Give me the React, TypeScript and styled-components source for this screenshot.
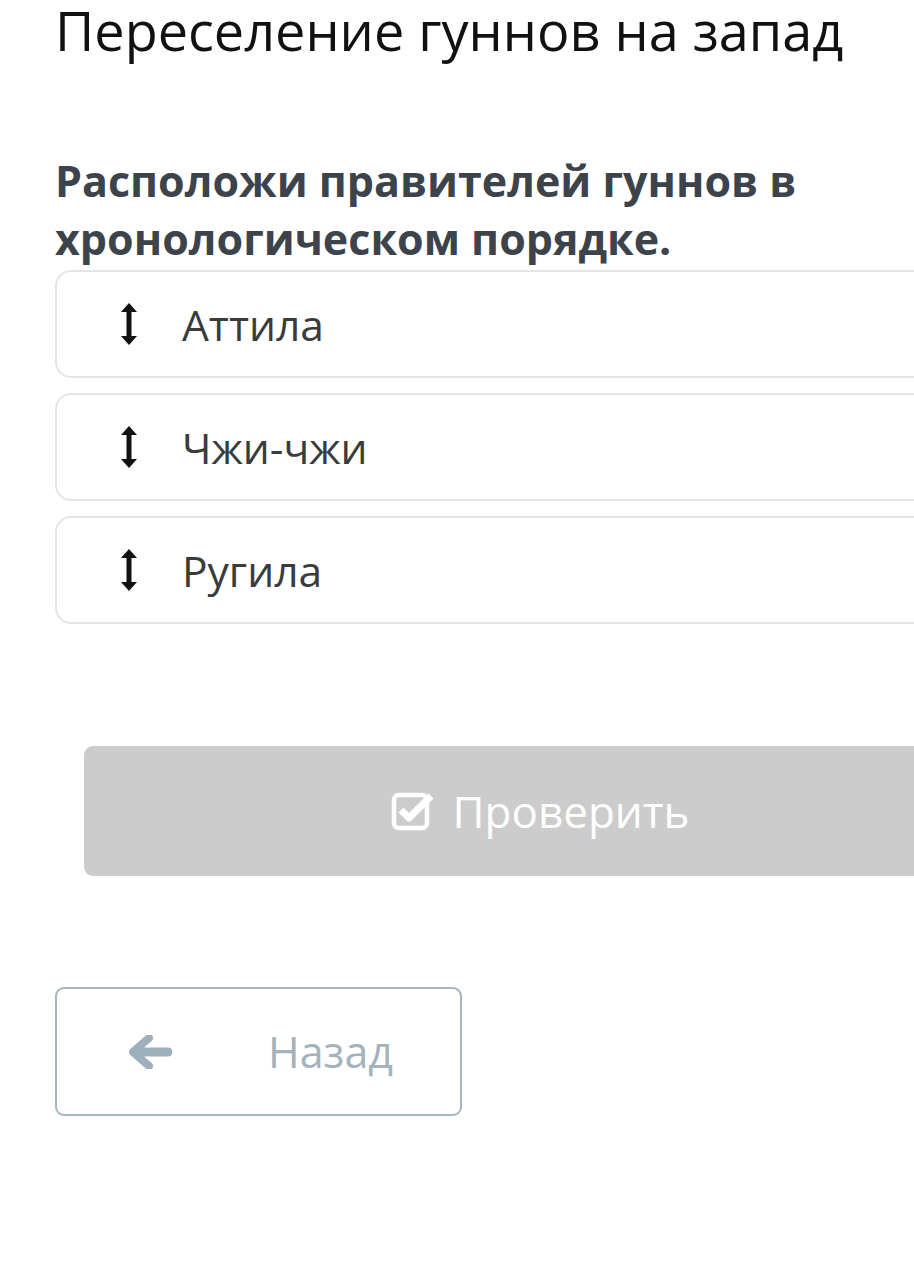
import React from "react";
import styled, { createGlobalStyle } from "styled-components";

const Global = createGlobalStyle`
  html, body { margin: 0; padding: 0; background: #ffffff; overflow: hidden; }
  body { font-family: "Open Sans", "Noto Sans", sans-serif; }
`;

const Page = styled.div`
  width: 1100px;
  padding: 0 0 0 55px;
  box-sizing: border-box;
`;

const Title = styled.h1`
  margin: 0;
  font-weight: 400;
  font-size: 54px;
  line-height: 60px;
  color: #111;
`;

const Question = styled.h2`
  margin: 92px 0 0 0;
  font-weight: 700;
  font-size: 43px;
  line-height: 58px;
  color: #3d434b;
`;

const List = styled.div`
  display: flex;
  flex-direction: column;
  gap: 15px;
  width: 970px;
  margin-top: 2px;
`;

const Item = styled.div`
  display: flex;
  align-items: center;
  height: 108px;
  box-sizing: border-box;
  border: 2px solid #e3e5e6;
  border-radius: 16px;
  padding-left: 64px;
  gap: 45px;
`;

const ItemText = styled.span`
  font-size: 42.5px;
  color: #3a3b3c;
`;

const CheckButton = styled.div`
  margin: 122px 0 0 29px;
  width: 912px;
  height: 130px;
  background: #cccccc;
  border-radius: 9px;
  display: flex;
  align-items: center;
  justify-content: center;
  gap: 18px;
  color: #ffffff;
  font-size: 44px;
`;

const BackButton = styled.div`
  margin-top: 111px;
  width: 407px;
  height: 129px;
  box-sizing: border-box;
  border: 2.5px solid #a7b6bf;
  border-radius: 9px;
  display: flex;
  align-items: center;
  padding-left: 72px;
  gap: 96px;
  color: #a3b3be;
  font-size: 43px;
`;

const Icon = styled.svg`
  flex: none;
  display: block;
`;

const DragIcon = () => (
  <Icon width="16" height="42" viewBox="0 0 16 42">
    <path d="M8 0 L16 9 L10.5 9 L10.5 33 L16 33 L8 42 L0 33 L5.5 33 L5.5 9 L0 9 Z" fill="#111" />
  </Icon>
);

const CheckIcon = () => (
  <Icon width="44" height="40" viewBox="0 0 44 40">
    <rect x="3" y="4" width="33" height="33" rx="5" fill="none" stroke="#fff" strokeWidth="4.5" />
    <path d="M10 19 L18 27 L40 5" fill="none" stroke="#fff" strokeWidth="7" strokeLinejoin="round" />
  </Icon>
);

const ArrowIcon = () => (
  <Icon width="43" height="34" viewBox="0 0 43 34">
    <path d="M20 3 L4 17 L20 31" fill="none" stroke="#9db0bd" strokeWidth="8" strokeLinecap="round" strokeLinejoin="round" />
    <path d="M6 17 L39 17" fill="none" stroke="#9db0bd" strokeWidth="9" strokeLinecap="round" />
  </Icon>
);

const items = ["Аттила", "Чжи-чжи", "Ругила"];

export default function App() {
  return (
    <>
      <Global />
      <Page>
        <Title>Переселение гуннов на запад</Title>
        <Question>
          Расположи правителей гуннов в<br />хронологическом порядке.
        </Question>
        <List>
          {items.map((t) => (
            <Item key={t}>
              <DragIcon />
              <ItemText>{t}</ItemText>
            </Item>
          ))}
        </List>
        <CheckButton>
          <CheckIcon />
          <span>Проверить</span>
        </CheckButton>
        <BackButton>
          <ArrowIcon />
          <span>Назад</span>
        </BackButton>
      </Page>
    </>
  );
}
